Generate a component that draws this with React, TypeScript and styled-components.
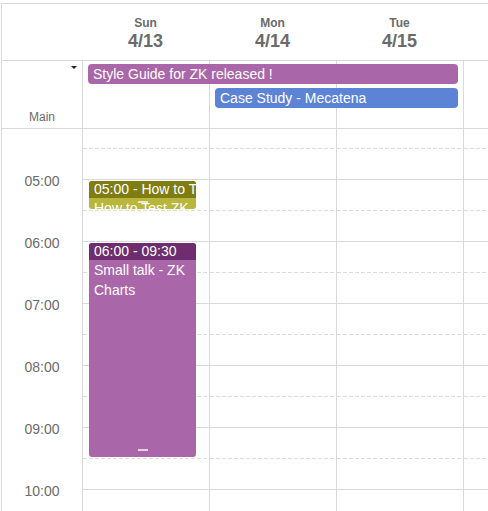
import React, { useLayoutEffect, useRef } from "react";
import styled, { createGlobalStyle } from "styled-components";

const HOUR = 62;
const DAY_W = 127;
const TIME_W = 80;
const LINE = "#d9d9d9";
const TEXT = "#6b6b6b";

const Global = createGlobalStyle`
  html, body { margin: 0; padding: 0; background: #fff; overflow: hidden; }
  body { font-family: "Liberation Sans", Arial, sans-serif; }
`;

const Page = styled.div`
  height: 100vh;
  padding: 3px 0 0 1px;
  box-sizing: border-box;
  display: flex;
  flex-direction: column;
  overflow: hidden;
`;

const Calendar = styled.div`
  flex: 1;
  min-height: 0;
  width: ${TIME_W + DAY_W * 5}px;
  border-left: 1px solid ${LINE};
  border-top: 1px solid ${LINE};
  display: flex;
  flex-direction: column;
`;

const Cols = `
  display: grid;
  grid-template-columns: ${TIME_W}px repeat(5, ${DAY_W}px);
`;

const HeaderRow = styled.div`
  ${Cols}
  height: 56px;
  border-bottom: 1px solid ${LINE};
`;

const DayHead = styled.div`
  display: flex;
  flex-direction: column;
  align-items: center;
  justify-content: center;
  padding-top: 4px;
  color: ${TEXT};
  font-weight: bold;
`;

const DayName = styled.span`
  font-size: 12px;
  line-height: 15px;
`;

const DayDate = styled.span`
  font-size: 18px;
  line-height: 21px;
`;

const AllDay = styled.div`
  ${Cols}
  grid-template-rows: 24px 24px 1fr;
  height: 67px;
  border-bottom: 1px solid ${LINE};
`;

const AllDayCorner = styled.div`
  grid-column: 1;
  grid-row: 1 / -1;
  display: flex;
  flex-direction: column;
  justify-content: space-between;
  align-items: center;
  padding: 5px 0 4px;
`;

const Caret = styled.span`
  align-self: flex-end;
  margin-right: 5px;
  width: 0;
  height: 0;
  border-left: 3px solid transparent;
  border-right: 3px solid transparent;
  border-top: 3px solid #222;
`;

const MainLabel = styled.span`
  font-size: 12px;
  line-height: 14px;
  color: ${TEXT};
`;

const AllDayCell = styled.div<{ $col: number }>`
  grid-column: ${(p) => p.$col};
  grid-row: 1 / -1;
  border-left: 1px solid ${LINE};
`;

const AllDayEvent = styled.div<{ $from: number; $to: number; $row: number; $bg: string }>`
  grid-column: ${(p) => p.$from} / ${(p) => p.$to};
  grid-row: ${(p) => p.$row};
  margin: 3px 5px 1px 6px;
  background: ${(p) => p.$bg};
  border-radius: 4px;
  color: #fff;
  font-size: 14px;
  line-height: 20px;
  padding: 0 5px;
  white-space: nowrap;
  overflow: hidden;
  z-index: 1;
`;

const Body = styled.div`
  flex: 1;
  min-height: 0;
  overflow: hidden;
`;

const BodyGrid = styled.div`
  ${Cols}
`;

const TimeCol = styled.div`
  display: flex;
  flex-direction: column;
  padding-top: ${HOUR / 2}px;
`;

const TimeLabel = styled.div`
  height: ${HOUR}px;
  display: flex;
  align-items: center;
  justify-content: center;
  font-size: 14px;
  color: ${TEXT};
  padding-top: 3px;
  box-sizing: border-box;
`;

const DayCol = styled.div`
  position: relative;
  border-left: 1px solid ${LINE};
`;

const Slot = styled.div`
  height: ${HOUR}px;
  box-sizing: border-box;
  border-top: 1px solid ${LINE};
  background-image: repeating-linear-gradient(
    to right,
    #dcdcdc 0 4px,
    transparent 4px 6px
  );
  background-size: 100% 1px;
  background-position: 0 ${HOUR / 2 - 1}px;
  background-repeat: no-repeat;
`;

const Event = styled.div<{ $bg: string }>`
  position: absolute;
  left: 6px;
  width: 107px;
  background: ${(p) => p.$bg};
  border-radius: 3px;
  overflow: hidden;
  color: #fff;
  font-size: 14px;
  display: flex;
  flex-direction: column;
`;

const EventHead = styled.div<{ $bg: string }>`
  background: ${(p) => p.$bg};
  height: 17px;
  line-height: 17px;
  padding: 0 5px;
  white-space: nowrap;
  flex-shrink: 0;
`;

const EventBody = styled.div`
  padding: 0 5px;
  line-height: 20px;
`;

const Handle = styled.span`
  position: absolute;
  bottom: 6px;
  left: 50%;
  margin-left: -5px;
  width: 10px;
  height: 2px;
  background: rgba(255, 255, 255, 0.7);
`;

const days = [
  { name: "Sun", date: "4/13" },
  { name: "Mon", date: "4/14" },
  { name: "Tue", date: "4/15" },
  { name: "Wed", date: "4/16" },
  { name: "Thu", date: "4/17" },
];

const timed = [
  {
    day: 0,
    start: 5,
    end: 5.5,
    head: "05:00 - How to Test ZK",
    body: "How to Test ZK",
    headBg: "#7f7c12",
    bg: "#b8b63b",
  },
  {
    day: 0,
    start: 6,
    end: 9.5,
    head: "06:00 - 09:30",
    body: "Small talk - ZK Charts",
    headBg: "#6e2d6e",
    bg: "#a967a9",
  },
];

const pad = (n: number) => (n < 10 ? "0" + n : "" + n);

export default function App() {
  const bodyRef = useRef<HTMLDivElement>(null);
  useLayoutEffect(() => {
    if (bodyRef.current) bodyRef.current.scrollTop = 260;
  }, []);

  return (
    <Page>
      <Global />
      <Calendar>
        <HeaderRow>
          <div />
          {days.map((d) => (
            <DayHead key={d.date}>
              <DayName>{d.name}</DayName>
              <DayDate>{d.date}</DayDate>
            </DayHead>
          ))}
        </HeaderRow>
        <AllDay>
          <AllDayCorner>
            <Caret />
            <MainLabel>Main</MainLabel>
          </AllDayCorner>
          {days.map((d, i) => (
            <AllDayCell key={d.date} $col={i + 2} />
          ))}
          <AllDayEvent $from={2} $to={5} $row={1} $bg="#a967a9">
            Style Guide for ZK released !
          </AllDayEvent>
          <AllDayEvent $from={3} $to={5} $row={2} $bg="#5c83d6">
            Case Study - Mecatena
          </AllDayEvent>
        </AllDay>
        <Body ref={bodyRef}>
          <BodyGrid>
            <TimeCol>
              {Array.from({ length: 23 }, (_, i) => (
                <TimeLabel key={i}>{pad(i + 1)}:00</TimeLabel>
              ))}
            </TimeCol>
            {days.map((d, di) => (
              <DayCol key={d.date}>
                {Array.from({ length: 24 }, (_, h) => (
                  <Slot key={h} />
                ))}
                {timed
                  .filter((e) => e.day === di)
                  .map((e) => (
                    <Event
                      key={e.head}
                      $bg={e.bg}
                      style={{
                        top: e.start * HOUR + 2,
                        height: (e.end - e.start) * HOUR - 3,
                      }}
                    >
                      <EventHead $bg={e.headBg}>{e.head}</EventHead>
                      <EventBody>{e.body}</EventBody>
                      <Handle />
                    </Event>
                  ))}
              </DayCol>
            ))}
          </BodyGrid>
        </Body>
      </Calendar>
    </Page>
  );
}
